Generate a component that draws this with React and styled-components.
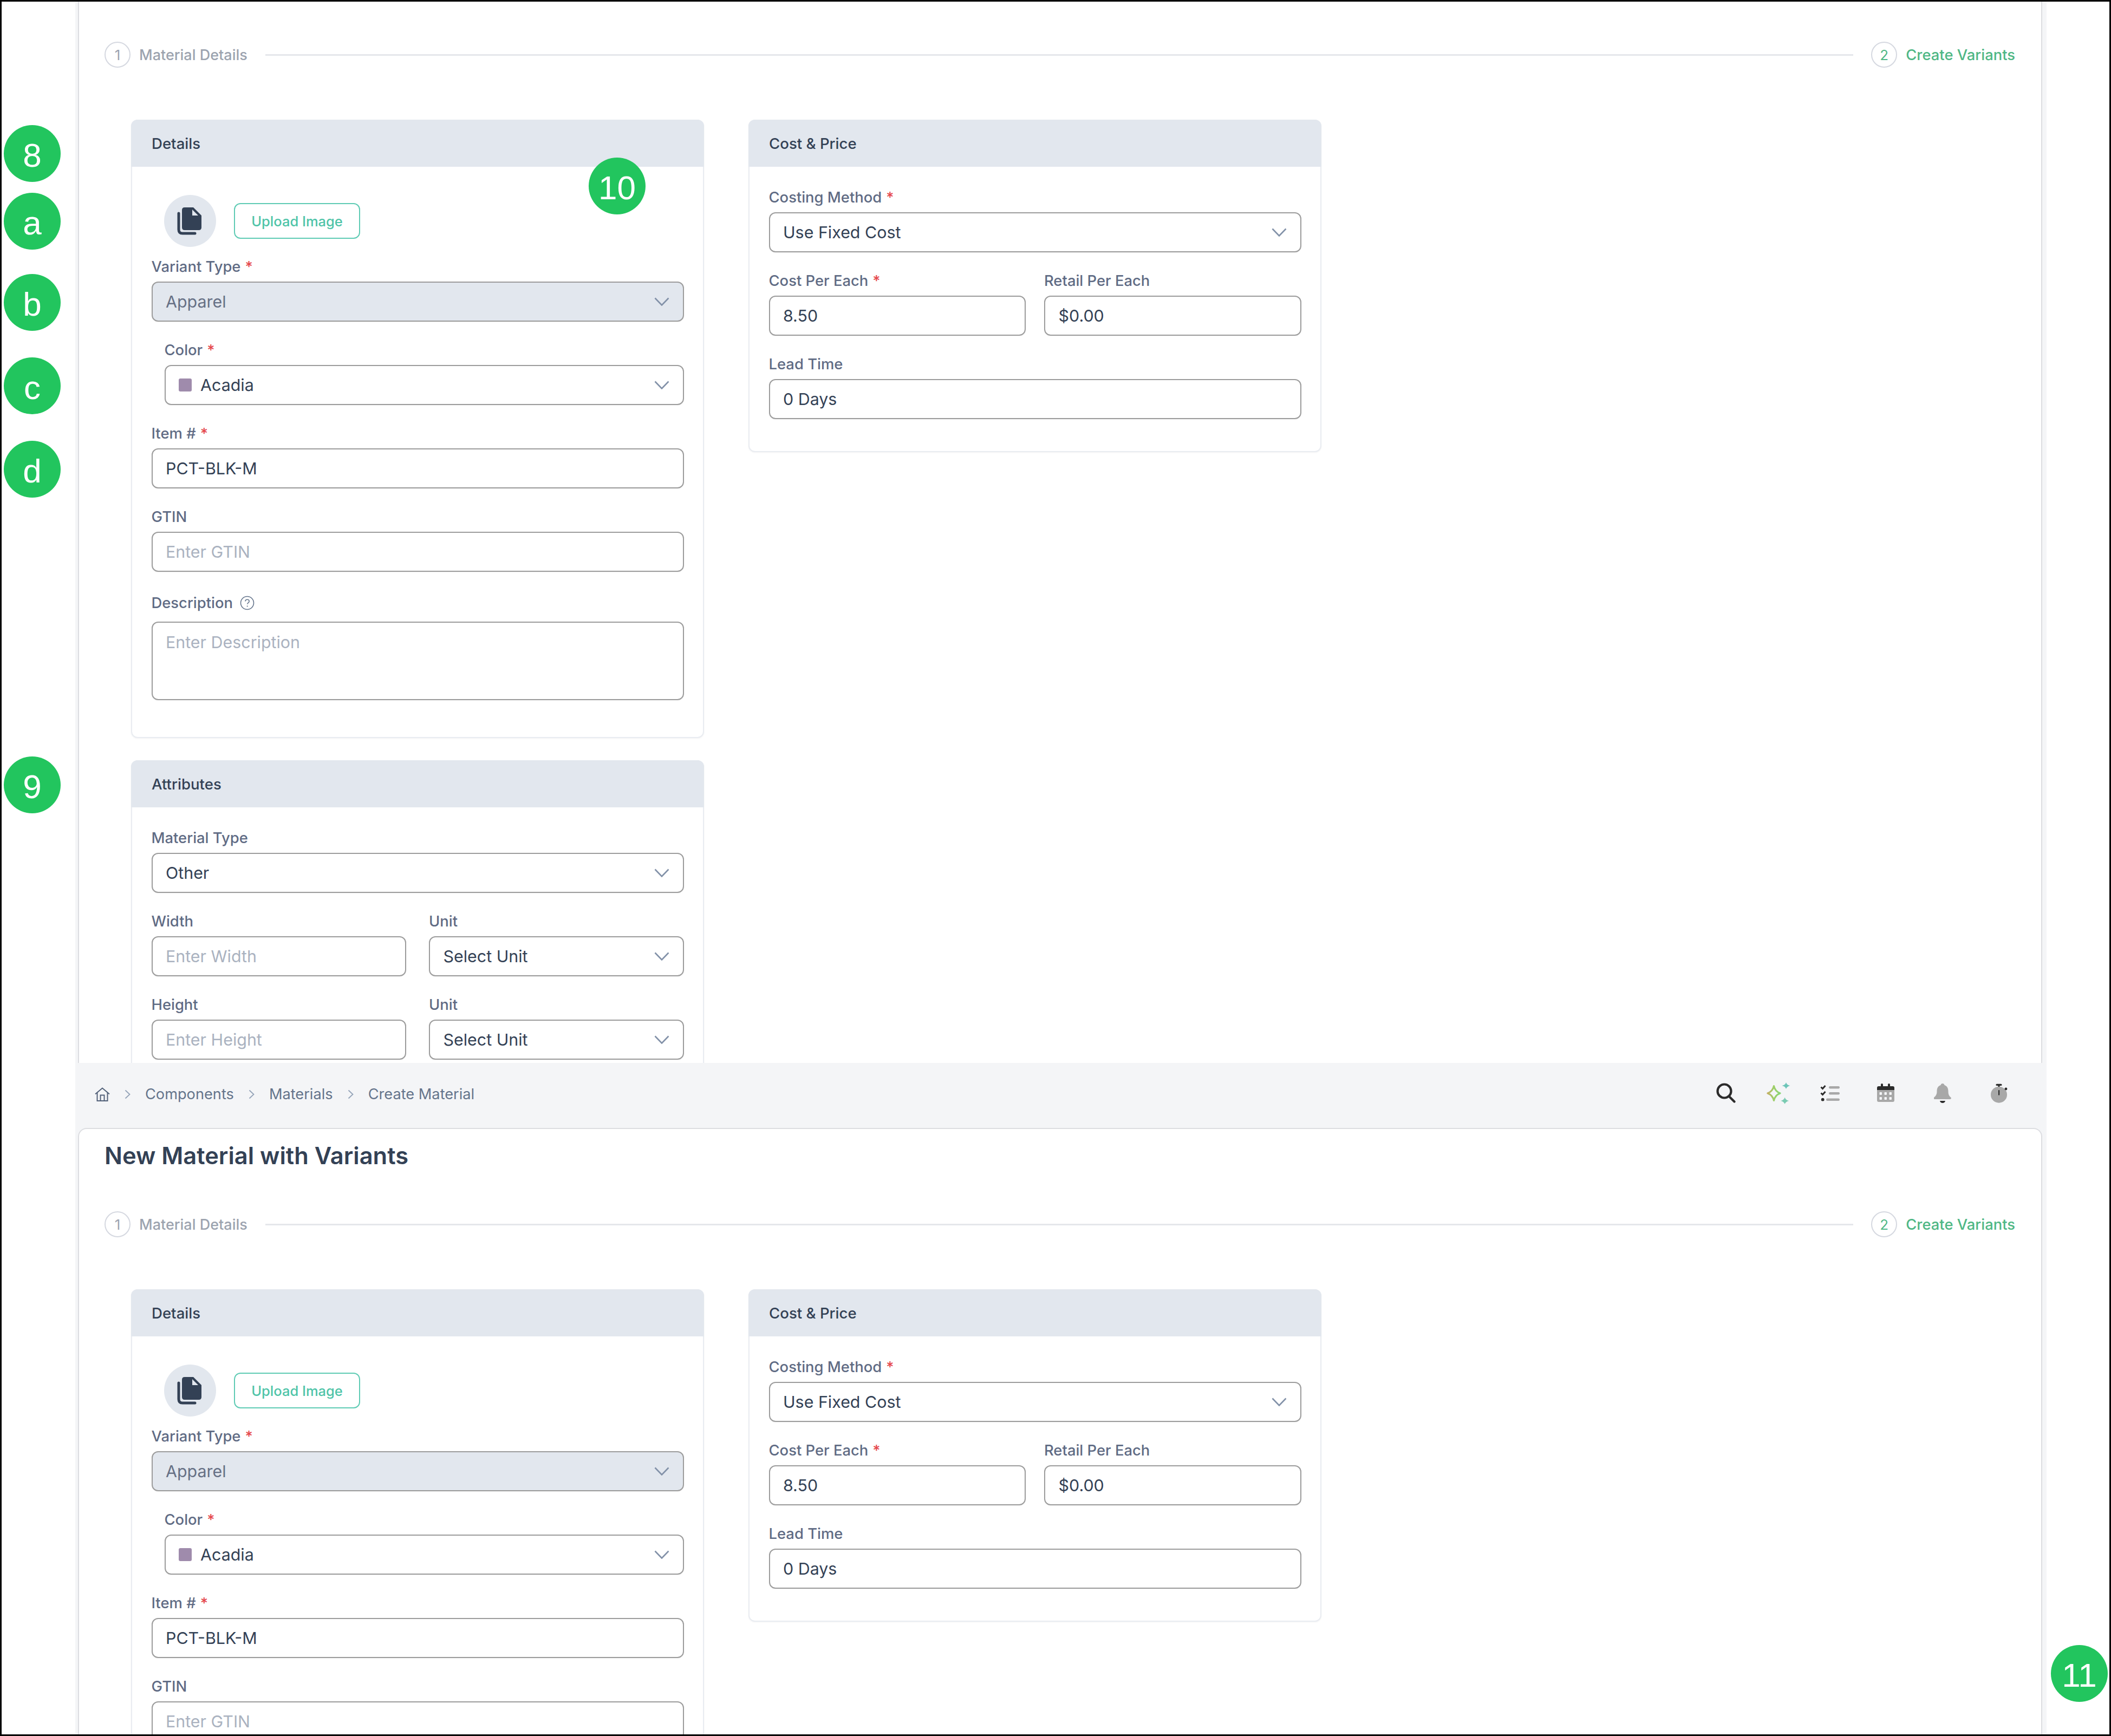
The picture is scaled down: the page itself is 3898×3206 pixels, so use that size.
import React from "react";
import styled, { createGlobalStyle } from "styled-components";

const Global = createGlobalStyle`
  html, body { margin: 0; padding: 0; background: #fff; }
  * { box-sizing: border-box; }
  body { font-family: Inter, "Noto Sans", sans-serif; -webkit-font-smoothing: antialiased; }
`;

const Frame = styled.div`
  position: relative;
  width: 3898px;
  height: 3206px;
  border: 3px solid #000;
  background: #fff;
  overflow: hidden;
  display: flex;
`;
const Shell = styled.main`
  margin-left: 136px;
  width: 3640px;
  height: 100%;
  background: #f4f5f7;
  display: flex;
  flex-direction: column;
`;
const TopCrop = styled.section`
  height: 1960px;
  flex: none;
  overflow: hidden;
  padding: 0 8px 0 5px;
`;
const BottomCrop = styled.section`
  flex: 1;
  min-height: 0;
  overflow: hidden;
  display: flex;
  flex-direction: column;
  padding: 0 8px 0 5px;
`;
const PageCard = styled.div`
  background: #fff;
  border: 2px solid #dcdde1;
  border-top: ${(p) => (p.$open ? "none" : "2px solid #dcdde1")};
  border-bottom: none;
  border-radius: ${(p) => (p.$open ? "0" : "16px 16px 0 0")};
  padding: ${(p) => (p.$open ? "74px" : "19px")} 48px 0 47px;
  flex: 1;
  height: ${(p) => (p.$open ? "100%" : "auto")};
`;
const TopBar = styled.header`
  height: 120px;
  flex: none;
  margin: 0 -8px 0 -5px;
  padding: 0 72px 0 36px;
  display: flex;
  justify-content: space-between;
  align-items: flex-start;
`;
const Crumbs = styled.nav`
  display: flex;
  align-items: center;
  gap: 27px;
  height: 40px;
  margin-top: 38px;
`;
const Crumb = styled.span`
  font-size: 27.2px;
  color: #64748b;
  line-height: 40px;
`;
const Tools = styled.div`
  display: flex;
  align-items: center;
  height: 41px;
  margin-top: 35px;
`;
const Tool = styled.span`
  display: flex;
  margin-left: ${(p) => p.$gap}px;
`;
const Title = styled.h1`
  margin: 0 0 73px;
  font-size: 43.4px;
  line-height: 60px;
  font-weight: 600;
  color: #334155;
`;
const Stepper = styled.div`
  display: flex;
  align-items: center;
  height: 48px;
`;
const StepDot = styled.span`
  width: 48px;
  height: 48px;
  flex: none;
  border-radius: 50%;
  border: 2px solid #d5d8e0;
  display: flex;
  align-items: center;
  justify-content: center;
  font-size: 26px;
  color: ${(p) => (p.$active ? "#4fb785" : "#9ca3af")};
`;
const StepName = styled.span`
  font-size: ${(p) => (p.$active ? 27.4 : 27)}px;
  font-weight: 500;
  margin-left: 16px;
  color: ${(p) => (p.$active ? "#4fb785" : "#9ca3af")};
`;
const StepLine = styled.span`
  flex: 1;
  height: 3px;
  margin: 0 33px;
  background: #e5e7eb;
`;
const Grid = styled.div`
  display: grid;
  grid-template-columns: 1058px 1058px;
  column-gap: 82px;
  align-items: start;
  margin: 96px 0 0 49px;
`;
const Column = styled.div`
  display: flex;
  flex-direction: column;
  gap: 41px;
`;
const Panel = styled.section`
  background: #fff;
  border: 2px solid #e9ecf1;
  border-radius: 12px;
  box-shadow: 0 1px 3px rgba(15, 23, 42, 0.05);
`;
const PanelHead = styled.h2`
  margin: -2px -2px 0;
  height: 87px;
  padding: 0 38px;
  display: flex;
  align-items: center;
  background: #e2e7ee;
  border-radius: 12px 12px 0 0;
  font-size: 27.6px;
  font-weight: 500;
  color: #334155;
`;
const PanelBody = styled.div`
  padding: 38px 35.5px ${(p) => p.$pb}px;
`;
const ImageRow = styled.div`
  display: flex;
  align-items: center;
  gap: 33px;
  margin: 14px 0 18px 23.5px;
`;
const Avatar = styled.span`
  width: 96px;
  height: 96px;
  border-radius: 50%;
  background: #e2e7ee;
  display: flex;
  align-items: center;
  justify-content: center;
`;
const UploadButton = styled.button`
  width: 233px;
  height: 66px;
  padding: 0;
  border: 2px solid #5fcbb4;
  border-radius: 12px;
  background: #fff;
  color: #4fc4a8;
  font-family: inherit;
  font-size: 25.5px;
  font-weight: 500;
`;
const Field = styled.div`
  margin: 0 0 34px ${(p) => p.$indent || 0}px;
  min-width: 0;
`;
const Label = styled.label`
  display: flex;
  align-items: center;
  height: ${(p) => (p.$tall ? 46 : 36)}px;
  margin-bottom: ${(p) => (p.$tall ? 12 : 10)}px;
  font-size: 27.4px;
  font-weight: 500;
  color: #5f6b84;
`;
const Req = styled.span`
  color: #e5484d;
  margin-left: 8px;
`;
const Control = styled.div`
  height: ${(p) => (p.$area ? 145 : 74)}px;
  border: 2px solid #9c9c9c;
  border-radius: 12px;
  padding: ${(p) => (p.$area ? "11px 26px 0 24.5px" : "0 25px 0 24.5px")};
  display: flex;
  align-items: ${(p) => (p.$area ? "flex-start" : "center")};
  justify-content: space-between;
  background: ${(p) => (p.$disabled ? "#e2e7ee" : "#fff")};
  box-shadow: 0 1px 2px rgba(0, 0, 0, 0.05);
  font-size: 30.4px;
  line-height: 50px;
  color: ${(p) => (p.$placeholder ? "#aab2c0" : p.$disabled ? "#667085" : "#334155")};
`;
const ValueWrap = styled.span`
  display: flex;
  align-items: center;
  gap: 16px;
`;
const Swatch = styled.span`
  width: 24px;
  height: 24px;
  border-radius: 3px;
  background: #9f8bac;
`;
const Pair = styled.div`
  display: grid;
  grid-template-columns: 1fr 1fr;
  column-gap: ${(p) => p.$gap}px;
`;
const Badge = styled.span`
  position: absolute;
  left: ${(p) => p.$x}px;
  top: ${(p) => p.$y}px;
  width: 105px;
  height: 105px;
  border-radius: 50%;
  background: #22c55e;
  color: #fff;
  font-family: "Liberation Sans", Arial, sans-serif;
  font-size: 62px;
  line-height: 112px;
  text-align: center;
`;

const Chevron = () => (
  <svg width="28" height="16" viewBox="0 0 28 16" fill="none">
    <path d="M1.5 1.5 14 14.5 26.5 1.5" stroke="#8291a8" strokeWidth="2.6" />
  </svg>
);
const CrumbSep = () => (
  <svg width="11" height="18" viewBox="0 0 11 18" fill="none">
    <path d="M1.5 1.5 9.5 9 1.5 16.5" stroke="#94a3b8" strokeWidth="1.8" />
  </svg>
);
const HomeIcon = () => (
  <svg width="28" height="26" viewBox="0 0 28 26" fill="none" stroke="#526179" strokeWidth="2">
    <path d="M1 12.5 14 1.5l13 11" />
    <path d="M4.5 10v15h19V10" />
    <path d="M10.5 25V14.5h7V25" />
  </svg>
);
const HelpIcon = () => (
  <svg width="27" height="27" viewBox="0 0 27 27" fill="none" style={{ marginLeft: 13 }}>
    <circle cx="13.5" cy="13.5" r="12" stroke="#64748b" strokeWidth="1.6" />
    <path d="M10 10.5c0-2 1.6-3.3 3.6-3.3s3.5 1.3 3.5 3.2c0 2.6-3.4 2.7-3.4 5.4" stroke="#64748b" strokeWidth="1.6" />
    <circle cx="13.7" cy="19.5" r="1.1" fill="#64748b" />
  </svg>
);
const FileIcon = () => (
  <svg width="45" height="51" viewBox="0 0 45 51" style={{ marginLeft: -4 }}>
    <path d="M3 11v30q0 7 7 7h23" fill="none" stroke="#334155" strokeWidth="5" strokeLinecap="round" />
    <path d="M14 0h16l15 15v22q0 5-5 5H14q-5 0-5-5V5q0-5 5-5z" fill="#334155" />
    <path d="M28 4l11 11H28z" fill="#e2e7ee" />
  </svg>
);
const SearchIcon = () => (
  <svg width="36" height="37" viewBox="0 0 36 37" fill="none" stroke="#2b2b2b" strokeWidth="4.2" strokeLinecap="round">
    <circle cx="15" cy="15" r="12.5" />
    <path d="M24 25l9.5 9.5" />
  </svg>
);
const SparkleIcon = () => (
  <svg width="47" height="41" viewBox="0 0 47 41">
    <defs>
      <linearGradient id="spark" gradientUnits="userSpaceOnUse" x1="2" x2="31" y1="21" y2="21">
        <stop offset="0" stopColor="#cda864" />
        <stop offset="0.5" stopColor="#9ccf68" />
        <stop offset="1" stopColor="#84d878" />
      </linearGradient>
    </defs>
    <path d="M16.5 7.5c1.5 7 5 11 11.5 13.5-6.5 2.5-10 6.5-11.5 13.5C15 27.5 11.5 23.5 5 21c6.5-2.5 10-6.5 11.5-13.5z" fill="none" stroke="url(#spark)" strokeWidth="3.2" strokeLinejoin="round" />
    <path d="M39 1c1 3 3 5 7.5 6-4.500 1-6.500 3-7.500 6-1-3-3-5-7.500-6 4.500-1 6.500-3 7.500-6z" fill="#6cc5b8" />
    <path d="M36.7 28.5c1 3 3 5.500 7.500 6.500-4.500 1-6.500 3.500-7.500 6-1-2.500-3-5-7.500-6 4.500-1 6.500-3.500 7.500-6.500z" fill="#7acbb2" />
  </svg>
);
const ChecklistIcon = () => (
  <svg width="38" height="30" viewBox="0 0 38 30">
    <path d="M2.5 3.5l3 3L10.5 1" fill="none" stroke="#2b2b2b" strokeWidth="3" />
    <path d="M2.5 14.5l3 3L10.5 12" fill="none" stroke="#2b2b2b" strokeWidth="3" />
    <circle cx="5.7" cy="26.7" r="2.9" fill="#2b2b2b" />
    <rect x="17" y="2" width="20" height="4.4" rx="2.2" fill="#a8a8a8" />
    <rect x="17" y="13" width="20" height="4.4" rx="2.2" fill="#a8a8a8" />
    <rect x="12" y="24.5" width="25" height="4.4" rx="2.2" fill="#a8a8a8" />
  </svg>
);
const CalendarIcon = () => (
  <svg width="33" height="35" viewBox="0 0 33 35">
    <path d="M0 12h32v19q0 3-3 3H3q-3 0-3-3z" fill="#a8a8a8" />
    <path d="M0 12V8q0-3 3-3h4V2q0-2 2-2t2 2v3h9V2q0-2 2-2t2 2v3h5q3 0 3 3v4z" fill="#2b2b2b" />
    {[4.5, 13.5, 22.5].map((x) =>
      [16, 25].map((y) => <rect key={`${x}-${y}`} x={x} y={y} width="4.5" height="5" rx="1" fill="#f4f5f7" />)
    )}
  </svg>
);
const BellIcon = () => (
  <svg width="33" height="37" viewBox="0 0 33 37">
    <path d="M16 1c2 0 3 1.2 3.5 3 5 1.5 7 6 7 11.5 0 5.5 1.500 8.500 5 11.500.8 1 .3 3-1.500 3H1.500C-.3 30-.8 28 0 27c3.500-3 5.500-6 5.500-11.500S7.500 5.500 12.500 4C13 2.200 14 1 16 1z" fill="#a8a8a8" />
    <path d="M11 33h10c-.5 2.500-2.500 4-5 4s-4.500-1.500-5-4z" fill="#2b2b2b" />
  </svg>
);
const TimerIcon = () => (
  <svg width="32" height="36" viewBox="0 0 32 36">
    <circle cx="16" cy="20.7" r="15" fill="#a8a8a8" />
    <rect x="10.5" y="0.7" width="11" height="3.4" rx="1.5" fill="#2b2b2b" />
    <rect x="14.5" y="3" width="3" height="3" fill="#2b2b2b" />
    <circle cx="29" cy="10" r="2.4" fill="#2b2b2b" />
    <rect x="15" y="12" width="2.2" height="9.7" rx="1" fill="#2b2b2b" />
  </svg>
);

const FormField = ({ label, required, help, tall, indent, value, placeholder, select, disabled, area, swatch }) => (
  <Field $indent={indent}>
    <Label $tall={tall}>
      {label}
      {required && <Req>*</Req>}
      {help && <HelpIcon />}
    </Label>
    <Control $area={area} $disabled={disabled} $placeholder={!!placeholder}>
      <ValueWrap>
        {swatch && <Swatch />}
        {value || placeholder}
      </ValueWrap>
      {select && <Chevron />}
    </Control>
  </Field>
);

const Steps = () => (
  <Stepper>
    <StepDot>1</StepDot>
    <StepName>Material Details</StepName>
    <StepLine />
    <StepDot $active>2</StepDot>
    <StepName $active>Create Variants</StepName>
  </Stepper>
);

const Form = () => (
  <Grid>
    <Column>
      <Panel>
        <PanelHead>Details</PanelHead>
        <PanelBody $pb={34}>
          <ImageRow>
            <Avatar>
              <FileIcon />
            </Avatar>
            <UploadButton>Upload Image</UploadButton>
          </ImageRow>
          <FormField label="Variant Type" required select disabled value="Apparel" />
          <FormField label="Color" required select indent={24} value="Acadia" swatch />
          <FormField label="Item #" required value="PCT-BLK-M" />
          <FormField label="GTIN" placeholder="Enter GTIN" />
          <FormField label="Description" help tall area placeholder="Enter Description" />
        </PanelBody>
      </Panel>
      <Panel>
        <PanelHead>Attributes</PanelHead>
        <PanelBody $pb={34}>
          <FormField label="Material Type" select value="Other" />
          <Pair $gap={42}>
            <FormField label="Width" placeholder="Enter Width" />
            <FormField label="Unit" select value="Select Unit" />
          </Pair>
          <Pair $gap={42}>
            <FormField label="Height" placeholder="Enter Height" />
            <FormField label="Unit" select value="Select Unit" />
          </Pair>
        </PanelBody>
      </Panel>
    </Column>
    <Panel>
      <PanelHead>{"Cost & Price"}</PanelHead>
      <PanelBody $pb={25}>
        <FormField label="Costing Method" required select value="Use Fixed Cost" />
        <Pair $gap={34}>
          <FormField label="Cost Per Each" required value="8.50" />
          <FormField label="Retail Per Each" value="$0.00" />
        </Pair>
        <FormField label="Lead Time" value="0 Days" />
      </PanelBody>
    </Panel>
  </Grid>
);

const badges = [
  ["8", 4, 228],
  ["a", 4, 353],
  ["b", 4, 503],
  ["c", 4, 657],
  ["d", 4, 811],
  ["9", 4, 1394],
  ["10", 1084, 288],
  ["11", 3784, 3035],
];

export default function App() {
  return (
    <>
      <Global />
      <Frame>
        <Shell>
          <TopCrop>
            <PageCard $open>
              <Steps />
              <Form />
            </PageCard>
          </TopCrop>
          <BottomCrop>
            <TopBar>
              <Crumbs>
                <HomeIcon />
                <CrumbSep />
                <Crumb>Components</Crumb>
                <CrumbSep />
                <Crumb>Materials</Crumb>
                <CrumbSep />
                <Crumb>Create Material</Crumb>
              </Crumbs>
              <Tools>
                <Tool $gap={0}><SearchIcon /></Tool>
                <Tool $gap={54}><SparkleIcon /></Tool>
                <Tool $gap={54}><ChecklistIcon /></Tool>
                <Tool $gap={68}><CalendarIcon /></Tool>
                <Tool $gap={72}><BellIcon /></Tool>
                <Tool $gap={71}><TimerIcon /></Tool>
              </Tools>
            </TopBar>
            <PageCard>
              <Title>New Material with Variants</Title>
              <Steps />
              <Form />
            </PageCard>
          </BottomCrop>
        </Shell>
        {badges.map(([t, x, y]) => (
          <Badge key={t} $x={x} $y={y}>{t}</Badge>
        ))}
      </Frame>
    </>
  );
}
